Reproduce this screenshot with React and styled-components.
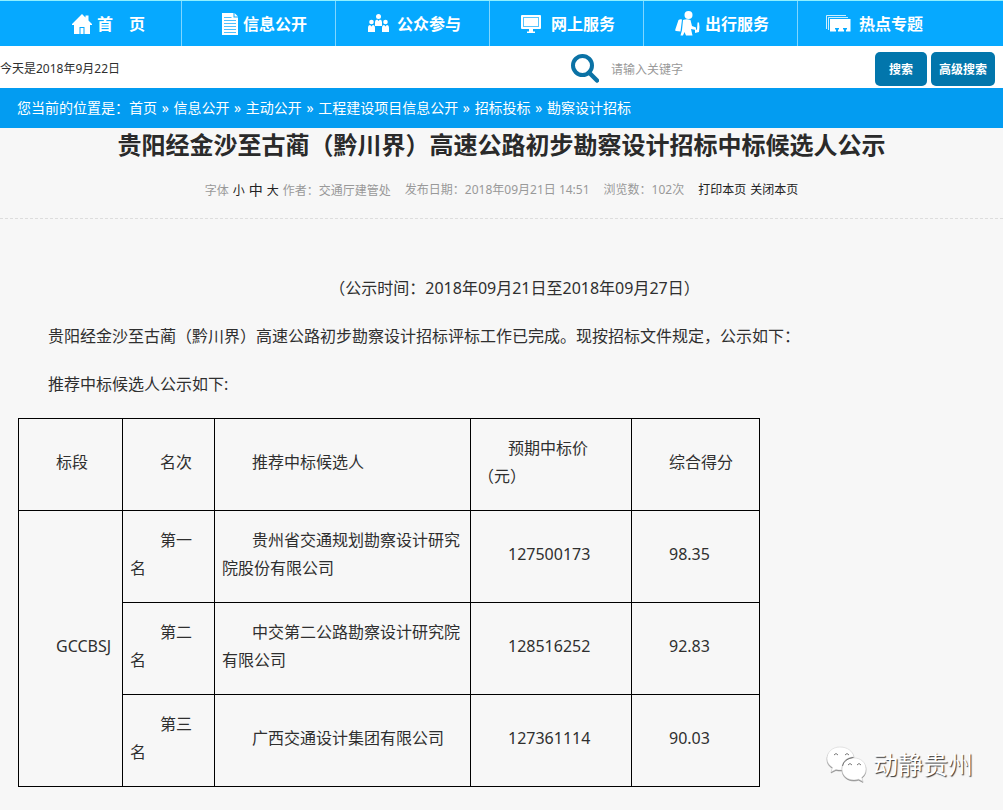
import React from 'react';
import styled, { createGlobalStyle } from 'styled-components';

const GlobalStyle = createGlobalStyle`
  *, *::before, *::after { box-sizing: border-box; }
  body {
    margin: 0;
    background: #fff;
    color: #2f2f2f;
    font-family: "Noto Sans", "Noto Sans CJK SC", sans-serif;
    font-size: 12px;
  }
  a { color: inherit; text-decoration: none; }
  p, h1 { margin: 0; }
`;

const Page = styled.div`
  display: flex;
  flex-direction: column;
  min-height: 100vh;
  padding-right: 3px;
`;

const Nav = styled.nav`
  display: flex;
  height: 46px;
  padding-left: 28px;
  background: #06a9ff;
  border-top: 1px solid #8ff0ff;
`;

const NavItem = styled.a`
  display: flex;
  align-items: center;
  justify-content: flex-end;
  gap: ${(p) => p.$gap || 8}px;
  width: 154px;
  padding-right: ${(p) => p.$end || 28}px;
  border-right: 1px solid #7fd6ff;
  color: #fff;
  font-size: 16px;
  font-weight: 700;
  line-height: 24px;
  white-space: pre;
  &:last-child { border-right-color: transparent; }
  svg { flex: none; fill: #fff; }
`;

const SearchBar = styled.form`
  display: flex;
  align-items: center;
  height: 42px;
  padding: 4px 8px 0 0;
  background: #fff;
`;

const Today = styled.span`
  flex: 1;
  line-height: 20px;
`;

const SearchLabel = styled.label`
  display: flex;
  margin-right: 8px;
`;

const Keyword = styled.input`
  width: 264px;
  height: 30px;
  padding: 0 4px;
  border: 0;
  outline: 0;
  background: transparent;
  font: inherit;
  color: #333;
  &::placeholder { color: #999; opacity: 1; }
`;

const SearchButton = styled.button`
  width: ${(p) => p.$width}px;
  height: 34px;
  margin-left: 4px;
  padding: 0;
  border: 0;
  border-radius: 5px;
  background: #0276ac;
  color: #fff;
  font: inherit;
  font-weight: 700;
`;

const Breadcrumb = styled.nav`
  height: 40px;
  padding-left: 17px;
  background: #039cf1;
  color: #fff;
  font-size: 14px;
  line-height: 40px;
  white-space: pre;
`;

const Separator = styled.span`
  padding: 0 1px;
`;

const Main = styled.main`
  position: relative;
  flex: 1;
  padding-bottom: 24px;
  background: #f7f7f7;
`;

const Title = styled.h1`
  color: #2a2a2a;
  font-size: 24px;
  line-height: 34px;
  text-align: center;
`;

const Meta = styled.div`
  display: flex;
  justify-content: center;
  gap: 14px;
  height: 57px;
  padding-top: 18px;
  border-bottom: 1px dashed #ddd;
  color: #999;
  line-height: 20px;
  a { color: #222; }
`;

const MetaGroup = styled.div`
  display: flex;
  align-items: baseline;
  gap: 4px;
  height: 20px;
`;

const FontSize = styled.button`
  padding: 0;
  border: 0;
  background: none;
  color: #222;
  font: inherit;
  font-size: ${(p) => p.$size}px;
`;

const Article = styled.article`
  padding: 55px 22px 0 18px;
  font-size: 16px;
  line-height: 28px;
`;

const Paragraph = styled.p`
  margin-bottom: 20px;
  text-indent: 30px;
  text-align: ${(p) => (p.$center ? 'center' : 'left')};
`;

const Results = styled.table`
  width: 742px;
  table-layout: fixed;
  border-collapse: collapse;
  th, td {
    height: 92px;
    padding: 14px 7px 20px;
    border: 1px solid #000;
    font-weight: 400;
    text-align: left;
    text-indent: 30px;
    vertical-align: middle;
  }
`;

const Watermark = styled.div`
  position: absolute;
  right: 30px;
  bottom: 28px;
  display: flex;
  align-items: center;
  gap: 5px;
  color: #fff;
  font-size: 25px;
  line-height: 36px;
  text-shadow: 1px 1px 1px #333;
  svg { filter: drop-shadow(0 1px 0 #888); }
`;

const HomeIcon = () => (
  <svg width="20" height="20" viewBox="0 0 20 20" aria-hidden="true">
    <path d="M10 0 13.500 3.500V1.500H16.500V6.500L20 10V11H18V20H12.500V13H7.500V20H2V11H0V10Z" />
    <path d="M8.500 14h3v6h-3z" />
  </svg>
);

const DocIcon = () => (
  <svg width="16" height="22" viewBox="0 0 16 22" aria-hidden="true">
    <path d="M0 0H11.500V4.500H16V22H0Z M12.500 0 16 3.500H12.500Z" />
    <path
      d="M2 4.500H9.500M2 7.500H14M2 10.500H14M2 13.500H14M2 16.500H14M2 19.500H14"
      stroke="#4cc0ff"
      strokeWidth="1"
    />
  </svg>
);

const PeopleIcon = () => (
  <svg width="21" height="19" viewBox="0 0 21 19" aria-hidden="true">
    <circle cx="10.500" cy="2.500" r="2.500" />
    <circle cx="3.500" cy="8" r="2.300" />
    <circle cx="17.500" cy="8" r="2.300" />
    <path d="M7 12V8q0-2.500 2.200-2.500l1.300 1.500 1.300-1.500Q14 5.500 14 8v4Z" />
    <path d="M0 18v-4q0-3 2.200-3l1.300 1.500L4.800 11Q7 11 7 14v4Z" />
    <path d="M14 18v-4q0-3 2.200-3l1.300 1.500 1.300-1.500Q21 11 21 14v4Z" />
  </svg>
);

const MonitorIcon = () => (
  <svg width="20" height="18" viewBox="0 0 20 18" aria-hidden="true">
    <rect width="20" height="14" rx="1" />
    <rect x="2.500" y="2.500" width="15" height="9" fill="none" stroke="#57c5ff" />
    <path d="M8 14h4v2.500h2V18H6v-1.500h2z" />
  </svg>
);

const TravelIcon = () => (
  <svg width="25" height="25" viewBox="0 0 25 25" aria-hidden="true">
    <circle cx="13.500" cy="4" r="4" />
    <path d="M3.500 9Q5 8 7 8.500L5.500 20.500 1 20Q0 20 .300 18.500Z" />
    <path d="M8 9q4-1.500 7.500 0l1.500 6 4 1.500V19l-5-1 1.500 6.500H11L9.500 21 8 24.500H5.500L7 19Z" />
    <path d="M22.500 11.500h1.500q1 5 0 9.500l-4 1v-3l2-.500Z" />
  </svg>
);

const TopicsIcon = () => (
  <svg width="25" height="17" viewBox="0 0 25 17" aria-hidden="true">
    <path d="M.500 14V.500H20M2.500 15V2.500H22" fill="none" stroke="#fff" opacity=".8" />
    <path d="M4 4H24.500V16.500H20V14.500H21V13H17V14.500H18V16.500H12V14.500H13V13H9V14.500H10V16.500H4Z" />
  </svg>
);

const SearchIcon = () => (
  <svg width="28" height="30" viewBox="0 0 28 30" role="img" aria-label="关键字">
    <circle cx="11.500" cy="11.500" r="9.500" fill="none" stroke="#0b72a5" strokeWidth="4" />
    <path d="M18 18.500 26 26.500" stroke="#0b72a5" strokeWidth="4.500" strokeLinecap="round" />
  </svg>
);

const WeChatIcon = () => (
  <svg width="42" height="38" viewBox="0 0 42 38" fill="#fff" stroke="#ccc" strokeWidth=".5" aria-hidden="true">
    <path d="M14 2C6 2 1 7.500 1 13.500c0 4 2 7 5.500 9L5 27l5-2.500c2 .600 4 .600 6 .500C15 17 21 12 28 12 27 6 21 2 14 2Z" />
    <path d="M28 13c-7 0-12 4.500-12 11s5 11 12 11c1.500 0 3-.200 4.500-.800L37 36.500l-1.300-4c2.800-2 4.300-5 4.300-8.500C40 17.500 35 13 28 13Z" />
    <path
      d="M8 10q2-3 4 0M19 10q2-3 4 0M22 20q2-3 4 0M31 20q2-3 4 0M16.500 21Q18 14 27 12.500"
      fill="none"
      stroke="#777"
      strokeWidth="1"
    />
  </svg>
);

const menu = [
  { label: '首　页', Icon: HomeIcon, gap: 5, end: 36 },
  { label: '信息公开', Icon: DocIcon, gap: 5 },
  { label: '公众参与', Icon: PeopleIcon },
  { label: '网上服务', Icon: MonitorIcon, gap: 10 },
  { label: '出行服务', Icon: TravelIcon, gap: 5 },
  { label: '热点专题', Icon: TopicsIcon },
];

const trail = ['首页', '信息公开', '主动公开', '工程建设项目信息公开', '招标投标', '勘察设计招标'];

const candidates = [
  ['第一名', '贵州省交通规划勘察设计研究院股份有限公司', '127500173', '98.35'],
  ['第二名', '中交第二公路勘察设计研究院有限公司', '128516252', '92.83'],
  ['第三名', '广西交通设计集团有限公司', '127361114', '90.03'],
];

export default function App() {
  return (
    <Page>
      <GlobalStyle />
      <Nav>
        {menu.map(({ label, Icon, gap, end }) => (
          <NavItem key={label} href="#" $gap={gap} $end={end}>
            <Icon />
            {label}
          </NavItem>
        ))}
      </Nav>
      <SearchBar>
        <Today>今天是2018年9月22日</Today>
        <SearchLabel htmlFor="keyword">
          <SearchIcon />
        </SearchLabel>
        <Keyword id="keyword" type="text" placeholder="请输入关键字" />
        <SearchButton type="button" $width={52}>搜索</SearchButton>
        <SearchButton type="button" $width={64}>高级搜索</SearchButton>
      </SearchBar>
      <Breadcrumb>
        您当前的位置是：
        {trail.map((name, i) => (
          <React.Fragment key={name}>
            {i > 0 && <Separator> » </Separator>}
            <a href="#">{name}</a>
          </React.Fragment>
        ))}
      </Breadcrumb>
      <Main>
        <Title>贵阳经金沙至古蔺（黔川界）高速公路初步勘察设计招标中标候选人公示</Title>
        <Meta>
          <MetaGroup>
            <span>字体</span>
            <FontSize type="button" $size={12}>小</FontSize>
            <FontSize type="button" $size={14}>中</FontSize>
            <FontSize type="button" $size={12}>大</FontSize>
            <span>作者：交通厅建管处</span>
          </MetaGroup>
          <MetaGroup>发布日期：2018年09月21日 14:51</MetaGroup>
          <MetaGroup>浏览数：102次</MetaGroup>
          <MetaGroup>
            <a href="#">打印本页</a>
            <a href="#">关闭本页</a>
          </MetaGroup>
        </Meta>
        <Article>
          <Paragraph $center>（公示时间：2018年09月21日至2018年09月27日）</Paragraph>
          <Paragraph>
            贵阳经金沙至古蔺（黔川界）高速公路初步勘察设计招标评标工作已完成。现按招标文件规定，公示如下：
          </Paragraph>
          <Paragraph>推荐中标候选人公示如下:</Paragraph>
          <Results>
            <colgroup>
              <col style={{ width: 104 }} />
              <col style={{ width: 92 }} />
              <col style={{ width: 256 }} />
              <col style={{ width: 161 }} />
              <col style={{ width: 128 }} />
            </colgroup>
            <thead>
              <tr>
                <th scope="col">标段</th>
                <th scope="col">名次</th>
                <th scope="col">推荐中标候选人</th>
                <th scope="col">预期中标价<br />（元）</th>
                <th scope="col">综合得分</th>
              </tr>
            </thead>
            <tbody>
              {candidates.map((row, i) => (
                <tr key={row[0]}>
                  {i === 0 && <td rowSpan={3}>GCCBSJ</td>}
                  {row.map((cell) => (
                    <td key={cell}>{cell}</td>
                  ))}
                </tr>
              ))}
            </tbody>
          </Results>
        </Article>
        <Watermark>
          <WeChatIcon />
          动静贵州
        </Watermark>
      </Main>
    </Page>
  );
}
